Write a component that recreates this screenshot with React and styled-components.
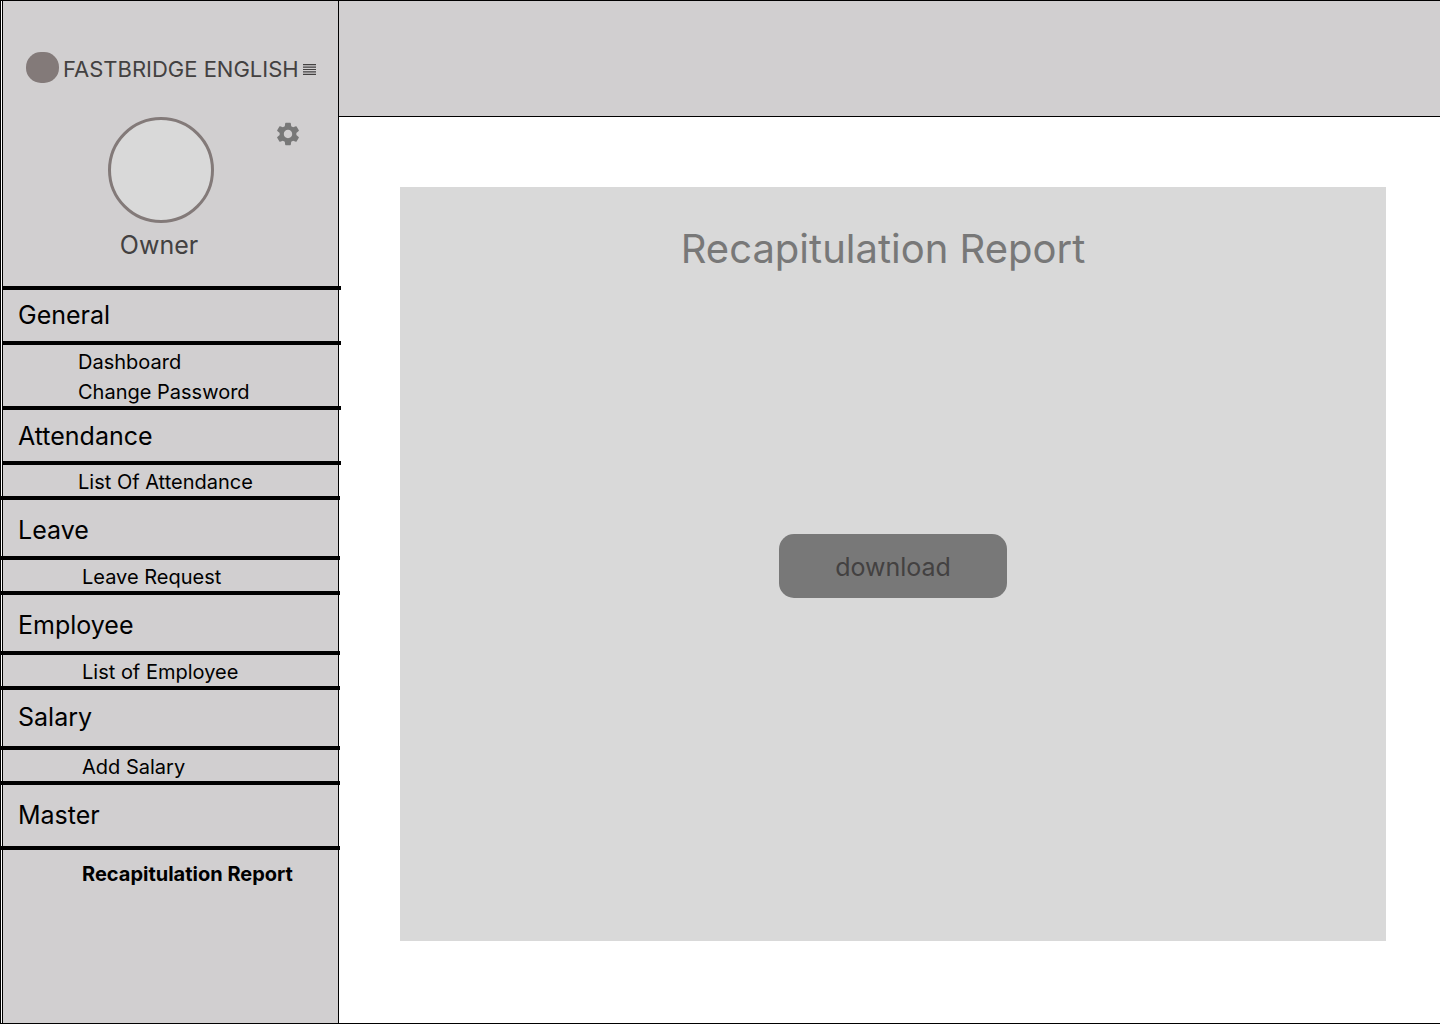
import React from "react";
import styled, { createGlobalStyle } from "styled-components";
import { MdSettings } from "react-icons/md";

const GlobalStyle = createGlobalStyle`
  *, *::before, *::after { box-sizing: border-box; }
  body {
    margin: 0;
    background: #fff;
    color: #000;
    font-family: Inter, "Liberation Sans", sans-serif;
  }
`;

const Page = styled.div`
  display: flex;
  min-height: 100vh;
  border: solid #000;
  border-width: 1px 0 1px 1px;
`;

const Sidebar = styled.aside`
  flex: none;
  width: 337px;
  margin-left: 1px;
  border: solid #000;
  border-width: 0 1px;
  background: #d1cfd0;
`;

const Brand = styled.div`
  display: flex;
  align-items: center;
  gap: 4px;
  padding: 50px 16px 0 23px;
`;

const Logo = styled.span`
  flex: none;
  width: 33px;
  height: 31px;
  border-radius: 15px;
  background: #837a79;
`;

const BrandName = styled.span`
  padding-top: 4px;
  color: #434141;
  font-size: 22px;
  line-height: 28px;
  white-space: nowrap;
`;

const IconButton = styled.button`
  display: flex;
  padding: ${(p) => p.$top || 0}px 0 0;
  border: 0;
  background: none;
  color: ${(p) => p.$color};
  cursor: pointer;
`;

const Profile = styled.section`
  display: grid;
  grid-template-columns: 1fr 106px 1fr;
  justify-items: center;
  padding: 34px 20px 26px 0;
`;

const Avatar = styled.div`
  grid-column: 2;
  width: 106px;
  height: 106px;
  border: 3px solid #837a79;
  border-radius: 50%;
  background: #d9d9d9;
`;

const Settings = styled.div`
  justify-self: end;
  padding: 3px 16px;
`;

const Role = styled.p`
  grid-column: 2;
  margin: 7px 0 0;
  padding-right: 3px;
  color: #434141;
  font-size: 25px;
  line-height: 30px;
`;

const GroupTitle = styled.h2`
  margin: 0 ${(p) => (p.$wide ? "-2px 0 -3px" : "-3px 0 0")};
  padding: ${(p) => p.$top}px 0 ${(p) => p.$bottom}px ${(p) => (p.$wide ? 18 : 15)}px;
  border: solid #000;
  border-width: 4px 0;
  font-size: 25px;
  font-weight: 400;
  line-height: 30px;
`;

const Links = styled.ul`
  display: grid;
  gap: 2px;
  margin: 0;
  padding: ${(p) => p.$top}px 0 0 ${(p) => p.$indent}px;
  list-style: none;
`;

const Link = styled.a`
  display: block;
  color: inherit;
  font-size: 20px;
  font-weight: ${(p) => (p.$current ? 700 : 400)};
  line-height: 28px;
  text-decoration: none;
`;

const Content = styled.div`
  display: flex;
  flex: 1;
  flex-direction: column;
  min-width: 0;
`;

const TopBar = styled.header`
  height: 116px;
  border-bottom: 1px solid #000;
  background: #d1cfd0;
`;

const Main = styled.main`
  display: flex;
  flex: 1;
  padding: 70px 54px 82px 61px;
`;

const Panel = styled.section`
  display: flex;
  flex: 1;
  flex-direction: column;
  align-items: center;
  background: #d9d9d9;
`;

const Title = styled.h1`
  margin: 0;
  padding: 37px 20px 0 0;
  color: #787878;
  font-size: 40px;
  font-weight: 400;
  line-height: 50px;
`;

const Download = styled.button`
  width: 228px;
  height: 64px;
  margin-top: 260px;
  padding: 2px 0 0;
  border: 0;
  border-radius: 15px;
  background: #787878;
  color: #434141;
  font: inherit;
  font-size: 25px;
  line-height: 30px;
  cursor: pointer;
`;

const groups = [
  { title: "General", top: 10, bottom: 11, indent: 75, links: ["Dashboard", "Change Password"] },
  { title: "Attendance", top: 11, bottom: 10, indent: 75, links: ["List Of Attendance"] },
  { title: "Leave", wide: true, top: 15, bottom: 11, indent: 79, links: ["Leave Request"] },
  { title: "Employee", wide: true, top: 15, bottom: 11, indent: 79, links: ["List of Employee"] },
  { title: "Salary", wide: true, top: 12, bottom: 14, indent: 79, links: ["Add Salary"] },
  { title: "Master", wide: true, top: 15, bottom: 16, indent: 79, space: 10, links: ["Recapitulation Report"] },
];

function MenuIcon() {
  return (
    <svg width="13" height="11" viewBox="0 0 13 11" fill="none" stroke="currentColor" aria-hidden="true">
      <path d="M0 .6h13M0 3.05h13M0 5.5h13M0 7.95h13M0 10.4h13" strokeWidth="1.2" />
    </svg>
  );
}

export default function App() {
  return (
    <>
      <GlobalStyle />
      <Page>
        <Sidebar>
          <Brand>
            <Logo />
            <BrandName>FASTBRIDGE ENGLISH</BrandName>
            <IconButton type="button" aria-label="Menu" $color="#434141" $top={4}>
              <MenuIcon />
            </IconButton>
          </Brand>
          <Profile>
            <Avatar />
            <Settings>
              <IconButton type="button" aria-label="Settings" $color="#787878">
                <MdSettings size={28} />
              </IconButton>
            </Settings>
            <Role>Owner</Role>
          </Profile>
          <nav aria-label="Main">
            {groups.map((g) => (
              <React.Fragment key={g.title}>
                <GroupTitle $wide={g.wide} $top={g.top} $bottom={g.bottom}>
                  {g.title}
                </GroupTitle>
                <Links $indent={g.indent} $top={g.space || 3}>
                  {g.links.map((text) => (
                    <li key={text}>
                      <Link href="#" $current={text === "Recapitulation Report"}>
                        {text}
                      </Link>
                    </li>
                  ))}
                </Links>
              </React.Fragment>
            ))}
          </nav>
        </Sidebar>
        <Content>
          <TopBar />
          <Main>
            <Panel>
              <Title>Recapitulation Report</Title>
              <Download type="button">download</Download>
            </Panel>
          </Main>
        </Content>
      </Page>
    </>
  );
}
